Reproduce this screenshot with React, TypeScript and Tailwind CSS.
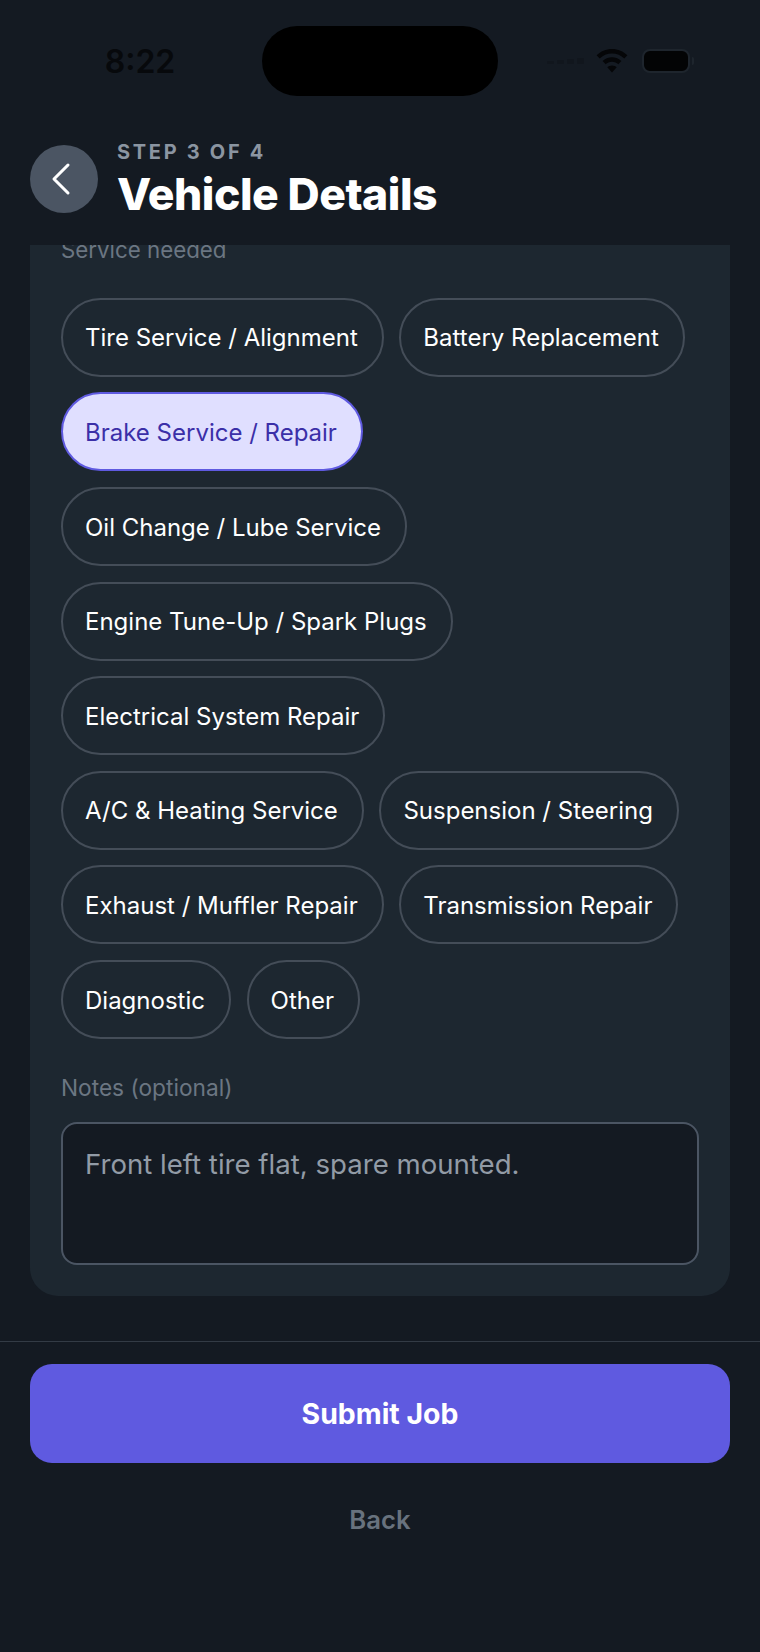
import { ChevronLeft } from 'lucide-react';

const services = [
  'Tire Service / Alignment',
  'Battery Replacement',
  'Brake Service / Repair',
  'Oil Change / Lube Service',
  'Engine Tune-Up / Spark Plugs',
  'Electrical System Repair',
  'A/C & Heating Service',
  'Suspension / Steering',
  'Exhaust / Muffler Repair',
  'Transmission Repair',
  'Diagnostic',
  'Other',
];

const selected = 'Brake Service / Repair';

function StatusBar() {
  return (
    <div className="flex h-[122px] shrink-0 items-start justify-between pt-[26px]">
      <div className="flex w-[262px] justify-center pl-[18px] pt-[17px] text-[32px] leading-[38px] font-semibold text-[#07090c]">
        8:22
      </div>
      <div className="h-[70px] w-[236px] rounded-[35px] bg-black" />
      <div className="flex w-[262px] items-center gap-[14px] pl-[49px] pt-[23px]">
        <div className="flex items-end gap-[3px] opacity-30">
          <span className="h-[3px] w-[7px] rounded-[1px] bg-[#0b0e12]" />
          <span className="h-[4px] w-[7px] rounded-[1px] bg-[#0b0e12]" />
          <span className="h-[5px] w-[7px] rounded-[1px] bg-[#0b0e12]" />
          <span className="h-[6px] w-[7px] rounded-[1px] bg-[#0b0e12]" />
        </div>
        <svg width="32" height="24" viewBox="0 0 32 24" className="-ml-[2px]" fill="#050608">
          <path d="M16 0C10 0 4.600 2.400 .6 6.300L3.700 9.500C6.900 6.400 11.200 4.500 16 4.500s9.100 1.900 12.300 5l3.100-3.200C27.400 2.400 22 0 16 0z" />
          <path d="M16 8.200c-3.700 0-7 1.500-9.400 3.800l3.100 3.200C11.300 13.600 13.500 12.700 16 12.700s4.700.9 6.300 2.500l3.100-3.200C23 9.700 19.700 8.200 16 8.200z" />
          <path d="M16 16.400c-1.900 0-3.500.7-4.700 1.900L16 23.400l4.700-5.100c-1.200-1.200-2.800-1.900-4.700-1.900z" />
        </svg>
        <div className="flex items-center gap-[2px]">
          <div className="h-[24px] w-[48px] rounded-[8px] border-[2px] border-[#1e252d] bg-[#030405]" />
          <div className="h-[8px] w-[2px] rounded-r-sm bg-[#1e252d]" />
        </div>
      </div>
    </div>
  );
}

function Header() {
  return (
    <div className="flex h-[123px] shrink-0 items-start gap-[20px] px-[30px] pt-[23px]">
      <button className="flex h-[68px] w-[68px] items-center justify-center rounded-full bg-[#4b5563]">
        <ChevronLeft size={56} strokeWidth={1.3} className="-ml-[6px] shrink-0 text-white" />
      </button>
      <div className="-mt-[6px] -ml-[1px]">
        <div className="text-[20px] leading-[26px] font-bold tracking-[2.700px] text-[#8b95a1]">
          STEP 3 OF 4
        </div>
        <h1 className="mt-[3px] text-[44.500px] leading-[52px] font-extrabold tracking-[-0.5px] text-white">
          Vehicle Details
        </h1>
      </div>
    </div>
  );
}

export default function App() {
  return (
    <div
      className="flex h-[1652px] w-[760px] flex-col overflow-hidden bg-[#141a22]"
      style={{ fontFamily: 'Inter, "Liberation Sans", sans-serif' }}
    >
      <StatusBar />
      <Header />

      <div className="flex min-h-0 flex-1 flex-col justify-end overflow-hidden px-[30px] pb-[45px]">
        <div className="shrink-0 rounded-[28px] bg-[#1d2730] p-[31px]">
          <div className="text-[22.300px] leading-[28px] text-[#6b7682]">Service needed</div>
          <div className="mt-[33.500px] flex flex-wrap gap-[15.600px]">
            {services.map((name) => (
              <div
                key={name}
                className={
                  name === selected
                    ? 'flex h-[79px] items-center rounded-full border-2 border-[#5f5ae0] bg-[#e0dfff] pt-[2px] pr-[24px] pl-[22px] text-[24px] text-[#3b2fa8]'
                    : 'flex h-[79px] items-center rounded-full border-2 border-[#444d58] pt-[2px] pr-[24px] pl-[22px] text-[24px] text-white'
                }
              >
                {name}
              </div>
            ))}
          </div>
          <div className="mt-[35px] text-[22.700px] leading-[28px] text-[#6b7682]">Notes (optional)</div>
          <div className="mt-[20px] h-[143px] rounded-[16px] border-2 border-[#4b5563] bg-[#141a22] px-[22px] pt-[22px] text-[27.600px] leading-[36px] text-[#929ba6]">
            Front left tire flat, spare mounted.
          </div>
        </div>
      </div>

      <div className="h-[311px] shrink-0 border-t border-[#333b45] px-[30px] pt-[22px]">
        <button className="h-[99px] w-full rounded-[22px] bg-[#5f5ae0] pt-[2px] text-[28.400px] font-bold text-white">
          Submit Job
        </button>
        <div className="mt-[37px] text-center text-[25.700px] leading-[40px] font-semibold text-[#68727e]">
          Back
        </div>
      </div>
    </div>
  );
}
